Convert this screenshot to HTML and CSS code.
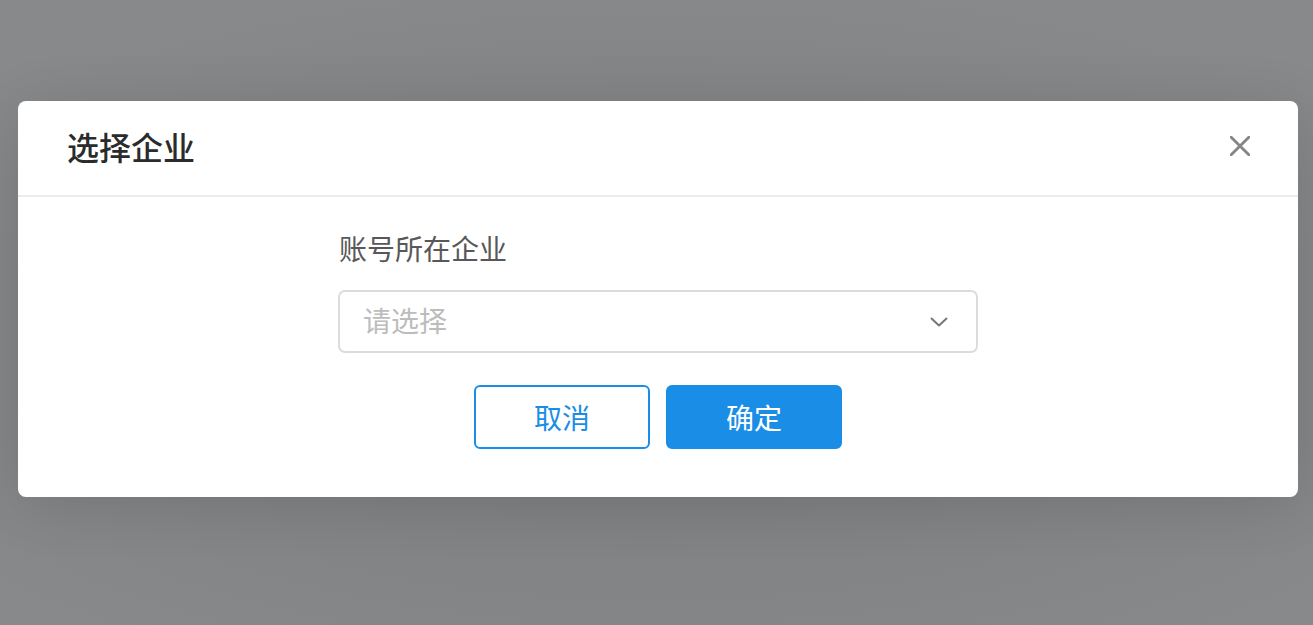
FILE: index.html
```html
<!DOCTYPE html>
<html lang="zh-CN">
<head>
<meta charset="utf-8">
<title>选择企业</title>
<link rel="stylesheet" href="styles.css">
</head>
<body>
<div class="mask">
  <div class="dialog">
    <div class="dialog-header">
      <h2 class="dialog-title">选择企业</h2>
      <button class="close-btn" aria-label="关闭">
        <svg width="20" height="20" viewBox="0 0 20 20"><path d="M1.2 1.2 L18.8 18.8 M18.8 1.2 L1.2 18.8" stroke="#858585" stroke-width="2.8" stroke-linecap="round" fill="none"/></svg>
      </button>
    </div>
    <div class="dialog-body">
      <div class="form">
        <div class="label">账号所在企业</div>
        <div class="select">
          <span class="placeholder">请选择</span>
          <svg class="chevron" width="18" height="10" viewBox="0 0 18 10"><path d="M1.5 1.5 L9 8.5 L16.5 1.5" stroke="#777" stroke-width="2" stroke-linecap="round" stroke-linejoin="round" fill="none"/></svg>
        </div>
        <div class="actions">
          <button class="btn btn-default">取消</button>
          <button class="btn btn-primary">确定</button>
        </div>
      </div>
    </div>
  </div>
</div>
</body>
</html>
```
FILE: styles.css
```css
* { box-sizing: border-box; }
html, body {
  margin: 0;
  padding: 0;
  height: 100%;
}
body {
  font-family: "Noto Sans CJK SC", "Noto Sans", sans-serif;
  background: #88898b;
  overflow: hidden;
}
.mask {
  height: 625px;
  padding: 101px 0 0 18px;
  background: radial-gradient(ellipse 70% 60% at 50% 55%, #7b7c7e 0%, #828385 55%, #88898b 100%);
}
.dialog {
  width: 1280px;
  height: 396px;
  background: #fff;
  border-radius: 8px;
  box-shadow: 0 8px 60px rgba(0, 0, 0, 0.12);
  display: flex;
  flex-direction: column;
}
.dialog-header {
  height: 96px;
  border-bottom: 2px solid #ececec;
  display: flex;
  align-items: center;
  justify-content: space-between;
  padding: 0 47px 0 49px;
}
.dialog-title {
  margin: 0;
  font-size: 32px;
  font-weight: 500;
  color: #2b2b2b;
  line-height: 44px;
  padding-bottom: 4px;
}
.close-btn {
  border: 0;
  background: none;
  padding: 0;
  width: 22px;
  height: 22px;
  display: flex;
  align-items: center;
  justify-content: center;
  cursor: pointer;
  margin-bottom: 4px;
}
.dialog-body {
  flex: 1;
  display: flex;
  justify-content: center;
  padding-top: 31px;
}
.form {
  width: 640px;
  display: flex;
  flex-direction: column;
}
.label {
  font-size: 28px;
  line-height: 40px;
  color: #585858;
  padding-left: 1px;
}
.select {
  margin-top: 22px;
  height: 63px;
  border: 2px solid #dcdcdc;
  border-radius: 7px;
  display: flex;
  align-items: center;
  justify-content: space-between;
  padding: 0 28px 3px 23px;
}
.placeholder {
  font-size: 28px;
  color: #bcbcbc;
  line-height: 40px;
}
.chevron {
  display: block;
  margin-top: 3px;
}
.actions {
  margin-top: 32px;
  display: flex;
  justify-content: center;
  gap: 16px;
}
.btn {
  width: 176px;
  height: 64px;
  border-radius: 6px;
  font-family: "Noto Sans CJK SC", "Noto Sans", sans-serif;
  font-size: 28px;
  cursor: pointer;
  padding: 0;
}
.btn-default {
  background: #fff;
  color: #1a8de6;
  border: 2px solid #1a8de6;
}
.btn-primary {
  background: #1a8de6;
  color: #fff;
  border: 2px solid #1a8de6;
}
```
